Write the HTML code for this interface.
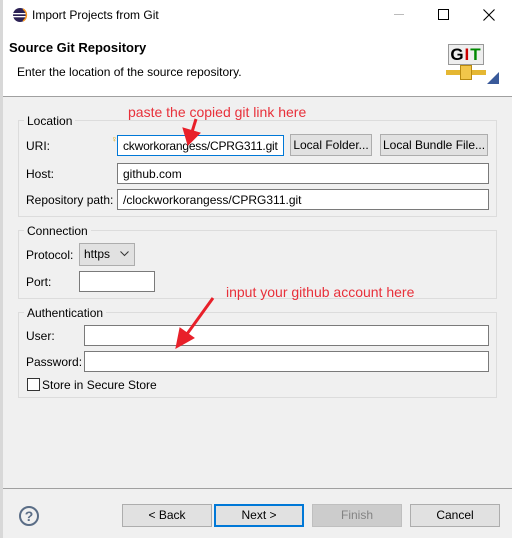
<!DOCTYPE html>
<html><head><style>
*{box-sizing:border-box;margin:0;padding:0}
body{width:512px;height:538px;background:#f0f0f0;font-family:"Liberation Sans",sans-serif;font-size:12px;color:#000;position:relative;overflow:hidden}
.a{position:absolute}
.inp{position:absolute;background:#fff;border:1px solid #7a7a7a;height:21px;padding:3px 5px;white-space:nowrap;overflow:hidden}
.btn{position:absolute;background:#e1e1e1;border:1px solid #adadad;text-align:center;line-height:20px}
.grp{position:absolute;border:1px solid #dcdcdc}
.gl{position:absolute;background:#f0f0f0;padding:0 3px}
.red{position:absolute;color:#e8303a;font-size:14px;white-space:nowrap}
</style></head><body>
<div class="a" style="left:0;top:0;width:3px;height:538px;background:#d8d8d8"></div>
<div class="a" style="left:3px;top:0;width:509px;height:96px;background:#fff"></div>
<svg class="a" style="left:12px;top:7px" width="16" height="16"><circle cx="8" cy="8" r="7" fill="#2c2255"/><rect x="1" y="6" width="14" height="1.3" fill="#fff"/><rect x="1" y="9" width="14" height="1.3" fill="#fff"/><path d="M11 2a7 7 0 0 1 0 12" stroke="#f7941e" stroke-width="1.5" fill="none"/></svg>
<div class="a" style="left:32px;top:8px">Import Projects from Git</div>
<div class="a" style="left:394px;top:14px;width:10px;height:1px;background:#bbb"></div>
<div class="a" style="left:438px;top:9px;width:11px;height:11px;border:1px solid #000"></div>
<svg class="a" style="left:483px;top:9px" width="12" height="12"><path d="M0.5 0.5L11.5 11.5M11.5 0.5L0.5 11.5" stroke="#000" stroke-width="1.1"/></svg>
<div class="a" style="left:9px;top:40px;font-weight:bold;font-size:13px">Source Git Repository</div>
<div class="a" style="left:17px;top:65px">Enter the location of the source repository.</div>
<div class="a" style="left:448px;top:44px;width:36px;height:21px;border:1px solid #999;background:#eee;font-weight:bold;font-size:17px;line-height:19px;text-align:center;letter-spacing:1px">G<span style="color:#c00">I</span><span style="color:#080">T</span></div>
<div class="a" style="left:446px;top:70px;width:40px;height:5px;background:#e5b732"></div>
<div class="a" style="left:460px;top:65px;width:12px;height:15px;background:#f2c64a;border:1px solid #b98a10"></div>
<svg class="a" style="left:487px;top:72px" width="12" height="12"><path d="M12 0V12H0Z" fill="#3a5a9a"/></svg>
<div class="a" style="left:3px;top:96px;width:509px;height:1px;background:#a0a0a0"></div>

<div class="grp" style="left:18px;top:120px;width:479px;height:97px"></div>
<div class="gl" style="left:24px;top:114px">Location</div>
<div class="a" style="left:26px;top:139px">URI:</div>
<div class="a" style="left:111px;top:134px;color:#d9a000;font-size:9px">♀</div>
<div class="inp" style="left:117px;top:135px;width:167px;border-color:#0078d7;letter-spacing:-0.2px">ckworkorangess/CPRG311.git</div>
<div class="btn" style="left:290px;top:134px;width:82px;height:22px">Local Folder...</div>
<div class="btn" style="left:380px;top:134px;width:108px;height:22px">Local Bundle File...</div>
<div class="a" style="left:26px;top:167px">Host:</div>
<div class="inp" style="left:117px;top:163px;width:372px">github.com</div>
<div class="a" style="left:26px;top:193px">Repository path:</div>
<div class="inp" style="left:117px;top:189px;width:372px">/clockworkorangess/CPRG311.git</div>

<div class="grp" style="left:18px;top:230px;width:479px;height:69px"></div>
<div class="gl" style="left:24px;top:224px">Connection</div>
<div class="a" style="left:26px;top:248px">Protocol:</div>
<div class="btn" style="left:79px;top:243px;width:56px;height:23px;text-align:left;padding-left:4px">https</div>
<svg class="a" style="left:120px;top:251px" width="9" height="6"><path d="M0.5 0.5L4.5 4.5L8.5 0.5" stroke="#333" fill="none"/></svg>
<div class="a" style="left:26px;top:275px">Port:</div>
<div class="inp" style="left:79px;top:271px;width:76px"></div>

<div class="grp" style="left:18px;top:312px;width:479px;height:86px"></div>
<div class="gl" style="left:24px;top:306px">Authentication</div>
<div class="a" style="left:26px;top:329px">User:</div>
<div class="inp" style="left:84px;top:325px;width:405px"></div>
<div class="a" style="left:26px;top:355px">Password:</div>
<div class="inp" style="left:84px;top:351px;width:405px"></div>
<div class="a" style="left:27px;top:378px;width:13px;height:13px;border:1px solid #333;background:#fff"></div>
<div class="a" style="left:42px;top:378px">Store in Secure Store</div>

<div class="red" style="left:128px;top:104px">paste the copied git link here</div>
<div class="red" style="left:226px;top:284px">input your github account here</div>
<svg class="a" style="left:0;top:0" width="512" height="538"><g stroke="#e8202a" stroke-width="3" fill="#e8202a"><line x1="196" y1="119" x2="192" y2="132"/><path d="M183 128L200 133L188 145Z" stroke-width="1"/><line x1="213" y1="298" x2="187" y2="334"/><path d="M180 328L194 338L176 348Z" stroke-width="1"/></g></svg>

<div class="a" style="left:3px;top:488px;width:509px;height:1px;background:#a0a0a0"></div>
<div class="a" style="left:19px;top:506px;width:20px;height:20px;border:2px solid #5a6d86;border-radius:50%;text-align:center;font-weight:bold;color:#5a6d86;line-height:16px;font-size:14px">?</div>
<div class="btn" style="left:122px;top:504px;width:90px;height:23px">&lt; Back</div>
<div class="btn" style="left:214px;top:504px;width:90px;height:23px;border:2px solid #0078d7;line-height:19px">Next &gt;</div>
<div class="btn" style="left:312px;top:504px;width:90px;height:23px;background:#ccc;border-color:#bfbfbf;color:#838383">Finish</div>
<div class="btn" style="left:410px;top:504px;width:90px;height:23px">Cancel</div>
</body></html>
